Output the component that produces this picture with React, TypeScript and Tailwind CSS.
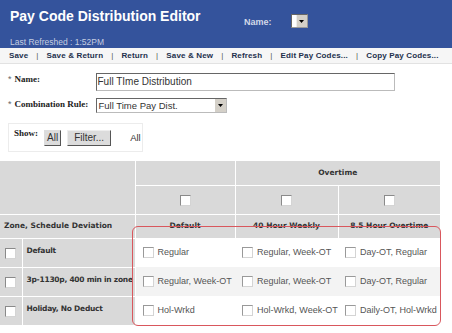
import React from "react";

const Cb = ({ cls = "" }: { cls?: string }) => (
  <span className={"inline-block w-[11px] h-[11px] bg-white border border-[#8a8a8a] border-r-[#d4d4d4] border-b-[#d4d4d4] align-middle " + cls} />
);

export default function App() {
  const toolbar = ["Save", "Save & Return", "Return", "Save & New", "Refresh", "Edit Pay Codes...", "Copy Pay Codes..."];
  const rows = [
    { name: "Default", cells: ["Regular", "Regular, Week-OT", "Day-OT, Regular"], bg: "bg-white" },
    { name: "3p-1130p, 400 min in zone", cells: ["Regular, Week-OT", "Regular, Week-OT", "Day-OT, Regular"], bg: "bg-[#f3f3f3]" },
    { name: "Holiday, No Deduct", cells: ["Hol-Wrkd", "Hol-Wrkd, Week-OT", "Daily-OT, Hol-Wrkd"], bg: "bg-white" },
  ];
  const hdr = "font-['DejaVu_Sans',sans-serif] font-bold text-[7.5px] text-[#333]";
  return (
    <div className="relative w-[452px] h-[333px] bg-white overflow-hidden font-['Liberation_Sans',Arial,sans-serif]">
      <div className="h-[48px] bg-[#34539c] flex">
        <div className="w-[232px] pl-[10px] pt-[8px]">
          <div className="text-white font-bold text-[14px] leading-[17px]">Pay Code Distribution Editor</div>
          <div className="text-[#c4cde0] text-[8.5px] mt-[12px] leading-[10px]">Last Refreshed : 1:52PM</div>
        </div>
        <div className="flex items-start pt-[16px]">
          <span className="text-[#d2d9e8] font-bold text-[9px] ml-[12px] leading-[12px]">Name:</span>
          <span className="ml-[19px] -mt-[2px] w-[17px] h-[14px] bg-white border border-[#9a9a9a] border-t-[#666] border-l-[#666] flex justify-end">
            <span className="w-[11px] h-full bg-[#d4d0c8] border-l border-[#eee] flex items-center justify-center">
              <svg width="5" height="3" viewBox="0 0 5 3"><path d="M0 0h5L2.5 3z" fill="#000" /></svg>
            </span>
          </span>
        </div>
      </div>
      <div className="h-[15px] bg-[#f6f6f6] flex items-center pl-[9px] text-[8px] font-bold text-[#23304d] whitespace-nowrap tracking-[0.15px]">
        {toolbar.map((t, i) => (
          <React.Fragment key={t}>
            {i > 0 && <span className="mx-[8px] font-normal text-[#555]">|</span>}
            <span>{t}</span>
          </React.Fragment>
        ))}
      </div>
      <div className="h-[1px] bg-[#e2e2e2]" />
      <div className="pl-[8px] pt-[9px]">
        <div className="flex items-start h-[22px]">
          <span className="text-[#666] text-[9px] mr-[3px]">*</span>
          <span className="font-['Liberation_Serif',serif] font-bold text-[9px] text-[#222] w-[81px] leading-[12px]">Name:</span>
          <div className="w-[299px] h-[18px] border border-[#bbb] border-t-[#666] border-l-[#666] text-[10px] text-[#333] pl-[1px] leading-[16px]">Full TIme Distribution</div>
        </div>
        <div className="flex items-start h-[25px] mt-[3px]">
          <span className="text-[#666] text-[9px] mr-[3px]">*</span>
          <span className="font-['Liberation_Serif',serif] font-bold text-[9px] text-[#222] w-[81px] leading-[12px] whitespace-nowrap">Combination Rule:</span>
          <div className="w-[131px] h-[15px] border border-[#bbb] border-t-[#666] border-l-[#666] text-[9.5px] text-[#333] pl-[2px] leading-[13px] flex justify-between">
            <span>Full Time Pay Dist.</span>
            <span className="w-[11px] h-full bg-[#d4d0c8] flex items-center justify-center">
              <svg width="5" height="3" viewBox="0 0 5 3"><path d="M0 0h5L2.5 3z" fill="#000" /></svg>
            </span>
          </div>
        </div>
        <div className="w-[135px] h-[29px] border border-[#ececec] flex items-start pt-[4px] pl-[5px]">
          <span className="font-['Liberation_Serif',serif] font-bold text-[9px] text-[#222] leading-[10px] mr-[6px]">Show:</span>
          <span className="mt-[2px] h-[16px] px-[2px] bg-[#dcdcdc] border border-[#ddd] border-r-[#555] border-b-[#555] text-[10px] text-[#333] leading-[14px]">All</span>
          <span className="ml-[6px] mt-[2px] h-[16px] w-[44px] text-center bg-[#dcdcdc] border border-[#eee] border-r-[#555] border-b-[#555] text-[10px] text-[#333] leading-[14px]">Filter...</span>
          <span className="ml-[19px] mt-[2px] text-[9.5px] text-[#333] leading-[16px]">All</span>
        </div>
      </div>
      <div className="mt-[9px] w-[440px]">
        <table className="w-[440px] border-collapse table-fixed">
          <colgroup>
            <col className="w-[22px]" />
            <col className="w-[113px]" />
            <col className="w-[100px]" />
            <col className="w-[103px]" />
            <col className="w-[102px]" />
          </colgroup>
          <tbody>
            <tr className="h-[24px] bg-[#d9d9d9]">
              <td colSpan={2} rowSpan={2} className="border border-white border-l-0 border-t-0" />
              <td className="border border-white border-t-0" />
              <td colSpan={2} className={"border border-white border-t-0 border-r-0 text-center " + hdr}>Overtime</td>
            </tr>
            <tr className="h-[29px] bg-[#d9d9d9]">
              <td className="border border-white text-center"><Cb /></td>
              <td className="border border-white text-center"><Cb /></td>
              <td className="border border-white border-r-0 text-center"><Cb /></td>
            </tr>
            <tr className="h-[24px] bg-[#d9d9d9]">
              <td colSpan={2} className={"border border-white border-l-0 pl-[4px] " + hdr}>Zone, Schedule Deviation</td>
              <td className={"border border-white text-center " + hdr}>Default</td>
              <td className={"border border-white text-center " + hdr}>40 Hour Weekly</td>
              <td className={"border border-white border-r-0 text-center " + hdr}>8.5 Hour Overtime</td>
            </tr>
            {rows.map((r) => (
              <tr key={r.name} className="h-[29px]">
                <td className="bg-[#d9d9d9] border border-white border-l-0 text-center"><Cb /></td>
                <td className={"bg-[#d9d9d9] border border-white align-top pt-[6px] pl-[4px] whitespace-nowrap overflow-hidden tracking-[-0.25px] " + hdr}>{r.name}</td>
                {r.cells.map((c, i) => (
                  <td key={i} className={r.bg + " pl-[7px] text-[9px] text-[#555] whitespace-nowrap"}>
                    <span className="flex items-center gap-[4px]"><Cb cls="border-[#999]" />{c}</span>
                  </td>
                ))}
              </tr>
            ))}
          </tbody>
        </table>
      </div>
      <div className="absolute left-[132px] top-[226px] w-[309px] h-[100px] border border-[#d9575d] rounded-[6px] pointer-events-none" />
    </div>
  );
}
